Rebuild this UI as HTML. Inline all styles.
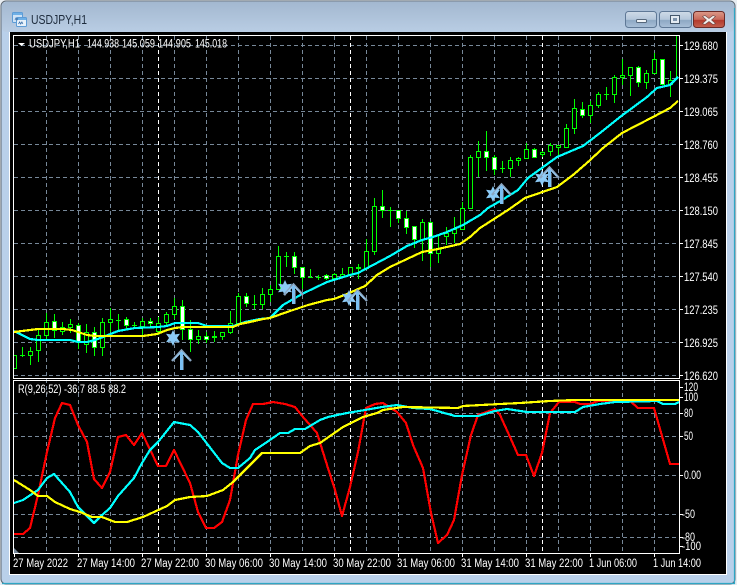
<!DOCTYPE html>
<html><head><meta charset="utf-8"><style>
html,body{margin:0;padding:0;background:#fff;width:737px;height:585px;overflow:hidden}
svg{display:block;position:absolute;left:0;top:0}
text{font-family:"Liberation Sans",sans-serif;font-size:11.5px;fill:#fff}
</style></head><body>
<svg width="737" height="585" viewBox="0 0 737 585" xmlns="http://www.w3.org/2000/svg">
<defs>
<linearGradient id="tb" x1="0" y1="0" x2="0" y2="1"><stop offset="0" stop-color="#a3b8d0"/><stop offset="1" stop-color="#b9cde4"/></linearGradient>
<linearGradient id="bb" x1="0" y1="0" x2="0" y2="1"><stop offset="0" stop-color="#cfdbe8"/><stop offset=".5" stop-color="#b4c6da"/><stop offset=".55" stop-color="#8ea8c4"/><stop offset="1" stop-color="#a9c0d8"/></linearGradient>
<linearGradient id="cb" x1="0" y1="0" x2="0" y2="1"><stop offset="0" stop-color="#dc9a8a"/><stop offset=".5" stop-color="#c8695a"/><stop offset=".55" stop-color="#b33a2c"/><stop offset="1" stop-color="#c4604e"/></linearGradient>
<clipPath id="cm"><rect x="14" y="36" width="665" height="342"/></clipPath>
<clipPath id="ci"><rect x="14" y="381" width="665" height="172"/></clipPath>
<g id="ar" fill="none"><path d="M-9.5 12L0 1.5L9.5 12" stroke="#8aa6c2" stroke-width="2.4"/><path d="M-7 10L0 3L7 10" stroke="#9ad0f8" stroke-width="1.2"/><path d="M0 3V21" stroke="#7cc0f2" stroke-width="3"/><path d="M2 7V21" stroke="#66788a" stroke-width=".8"/></g>
<path id="st" d="M0-8L2-3.6L7-4.2L4 0L7 4.2L2 3.6L0 8L-2 3.6L-7 4.2L-4 0L-7-4.2L-2-3.6Z" fill="#8ccaf6"/>
</defs>

<!-- window frame -->
<rect width="737" height="585" fill="#e8edf2"/>
<rect x="1" y="1" width="734" height="583" rx="5" fill="#b9d0ea" stroke="#5d6670"/>
<rect x="2" y="2" width="732" height="30" rx="4" fill="url(#tb)"/>
<path d="M734.5 8V583.5H2" fill="none" stroke="#2fa6c4" stroke-width="1.2"/>
<rect x="9" y="32" width="718" height="543" fill="#fff"/>
<rect x="10" y="32" width="716" height="542" fill="#000"/>

<!-- title -->
<g>
<rect x="12.5" y="12.5" width="10" height="10" rx="1" fill="#cfe3f6" stroke="#5d9cd6"/>
<rect x="16.5" y="17.5" width="10" height="9" rx="1" fill="#e8f2fb" stroke="#5d9cd6"/>
<rect x="13" y="13" width="9" height="2" fill="#6fb0e6"/><rect x="17" y="18" width="9" height="2" fill="#6fb0e6"/>
<path d="M15 20l1-2 1 2 1-2M18.5 24l1.2-2 1 2 1.2-2 1 2" fill="none" stroke="#3b6fa8" stroke-width=".8"/>
</g>
<text x="31" y="24" style="font-size:13px;fill:#1d2b3c" textLength="56" lengthAdjust="spacingAndGlyphs">USDJPY,H1</text>
<rect x="625.5" y="11.5" width="31" height="16" rx="3" fill="url(#bb)" stroke="#5f7896"/>
<rect x="659.5" y="11.5" width="32" height="16" rx="3" fill="url(#bb)" stroke="#5f7896"/>
<rect x="693.5" y="11.5" width="31" height="16" rx="3" fill="url(#cb)" stroke="#6a2a26"/>
<rect x="636.5" y="19.5" width="10" height="3" rx="1" fill="#f2f5f8" stroke="#55667a"/>
<rect x="670.5" y="15.5" width="9" height="8" fill="#e4ebf2" stroke="#45586c"/><rect x="673" y="18" width="4" height="3" fill="#7d93ab"/>
<path d="M705 15.5l4 3 4-3 2.5 1-4 3.5 4 3.5-2.5 1-4-3-4 3-2.5-1 4-3.5-4-3.5z" fill="#f4f1ef" stroke="#6b4a48" stroke-width=".6"/>

<!-- grid -->
<g fill="none" stroke="#778899" stroke-width="1" stroke-dasharray="4 3" shape-rendering="crispEdges">
<path d="M14 45.5H679M14 78.5H679M14 111.5H679M14 144.5H679M14 177.5H679M14 210.5H679M14 243.5H679M14 276.5H679M14 309.5H679M14 342.5H679M14 375.5H679"/>
<path d="M14 413.5H679M14 436.5H679M14 475.5H679M14 514.5H679M14 537.5H679"/>
<path d="M46.5 36V553M78.5 36V553M110.5 36V553M142.5 36V553M174.5 36V553M206.5 36V553M238.5 36V553M270.5 36V553M302.5 36V553M334.5 36V553M366.5 36V553M398.5 36V553M430.5 36V553M462.5 36V553M494.5 36V553M526.5 36V553M558.5 36V553M590.5 36V553M622.5 36V553M654.5 36V553"/>
</g>
<path d="M158.5 36V553M350.5 36V553M542.5 36V553" fill="none" stroke="#fff" stroke-dasharray="4 3" shape-rendering="crispEdges"/>

<!-- candles -->
<g clip-path="url(#cm)" shape-rendering="crispEdges" stroke="#00ff00" stroke-width="1">
<path fill="none" d="M14.5 355V368M22.5 347V357M30.5 347V365M38.5 330V362M46.5 313V340M54.5 314V338M62.5 322V335M70.5 319V333M78.5 323V349M86.5 324V353M94.5 327V356M102.5 318V356M110.5 308V332M118.5 314V331M126.5 317V330M134.5 322V329M142.5 318V337M150.5 318V327M158.5 317V335M166.5 312V327M174.5 298V319M182.5 300V340M190.5 320V352M198.5 330V344M206.5 332V343M214.5 331V342M222.5 332V340M230.5 311V334M238.5 293V323M246.5 293V307M254.5 295V309M262.5 288V309M270.5 285V302M278.5 246V290M286.5 252V267M294.5 252V274M302.5 267V289M310.5 269V277M318.5 275V280M326.5 274V280M334.5 273V281M342.5 268V277M350.5 267V277M358.5 264V279M366.5 239V270M374.5 198V255M382.5 190V218M390.5 207V227M398.5 210V223M406.5 211V234M414.5 226V248M422.5 219V261M430.5 221V267M438.5 235V263M446.5 227V245M454.5 217V243M462.5 202V230M470.5 155V208M478.5 141V177M486.5 131V171M494.5 155V175M502.5 161V173M510.5 157V177M518.5 157V166M526.5 143V159M534.5 148V158M542.5 151V157M550.5 143V156M558.5 145V155M566.5 124V148M574.5 99V134M582.5 102V118M590.5 101V123M598.5 92V108M606.5 87V100M614.5 75V103M622.5 59V85M630.5 67V96M638.5 66V87M646.5 70V89M654.5 53V74M662.5 59V85M670.5 71V97M676.5 36V78"/>
<path fill="none" d="M20 355.5H25M116 320.5H121M132 325.5H137M252 304.5H257M284 256.5H289M308 277.5H313M316 277.5H321M388 210.5H393M500 168.5H505M604 94.5H609"/>
<g fill="#000">
<rect x="12.5" y="355.5" width="4" height="13"/><rect x="28.5" y="351.5" width="4" height="4"/><rect x="36.5" y="335.5" width="4" height="15"/><rect x="44.5" y="322.5" width="4" height="13"/><rect x="60.5" y="327.5" width="4" height="4"/><rect x="68.5" y="324.5" width="4" height="3"/><rect x="84.5" y="332.5" width="4" height="12"/><rect x="100.5" y="322.5" width="4" height="25"/><rect x="108.5" y="319.5" width="4" height="3"/><rect x="140.5" y="321.5" width="4" height="5"/><rect x="156.5" y="323.5" width="4" height="8"/><rect x="164.5" y="314.5" width="4" height="8"/><rect x="172.5" y="306.5" width="4" height="8"/><rect x="196.5" y="336.5" width="4" height="3"/><rect x="212.5" y="336.5" width="4" height="1"/><rect x="220.5" y="332.5" width="4" height="4"/><rect x="228.5" y="323.5" width="4" height="9"/><rect x="236.5" y="296.5" width="4" height="27"/><rect x="260.5" y="294.5" width="4" height="10"/><rect x="268.5" y="289.5" width="4" height="5"/><rect x="276.5" y="256.5" width="4" height="33"/><rect x="332.5" y="274.5" width="4" height="4"/><rect x="340.5" y="274.5" width="4" height="2"/><rect x="348.5" y="267.5" width="4" height="7"/><rect x="356.5" y="267.5" width="4" height="1"/><rect x="364.5" y="251.5" width="4" height="17"/><rect x="372.5" y="206.5" width="4" height="45"/><rect x="420.5" y="222.5" width="4" height="17"/><rect x="436.5" y="248.5" width="4" height="5"/><rect x="444.5" y="233.5" width="4" height="3"/><rect x="452.5" y="229.5" width="4" height="4"/><rect x="460.5" y="208.5" width="4" height="21"/><rect x="468.5" y="157.5" width="4" height="51"/><rect x="476.5" y="151.5" width="4" height="6"/><rect x="508.5" y="160.5" width="4" height="8"/><rect x="516.5" y="158.5" width="4" height="2"/><rect x="524.5" y="149.5" width="4" height="9"/><rect x="540.5" y="152.5" width="4" height="2"/><rect x="548.5" y="145.5" width="4" height="6"/><rect x="556.5" y="145.5" width="4" height="2"/><rect x="564.5" y="128.5" width="4" height="19"/><rect x="572.5" y="108.5" width="4" height="20"/><rect x="588.5" y="105.5" width="4" height="10"/><rect x="596.5" y="94.5" width="4" height="11"/><rect x="612.5" y="77.5" width="4" height="17"/><rect x="620.5" y="75.5" width="4" height="2"/><rect x="628.5" y="67.5" width="4" height="8"/><rect x="644.5" y="73.5" width="4" height="9"/><rect x="652.5" y="59.5" width="4" height="14"/><rect x="668.5" y="80.5" width="4" height="4"/>
</g>
<g fill="#fff">
<rect x="52.5" y="321.5" width="4" height="9"/><rect x="76.5" y="325.5" width="4" height="16"/><rect x="92.5" y="332.5" width="4" height="15"/><rect x="124.5" y="319.5" width="4" height="6"/><rect x="148.5" y="321.5" width="4" height="2"/><rect x="180.5" y="306.5" width="4" height="23"/><rect x="188.5" y="329.5" width="4" height="10"/><rect x="204.5" y="336.5" width="4" height="3"/><rect x="244.5" y="296.5" width="4" height="7"/><rect x="292.5" y="256.5" width="4" height="11"/><rect x="300.5" y="267.5" width="4" height="10"/><rect x="324.5" y="275.5" width="4" height="3"/><rect x="380.5" y="206.5" width="4" height="4"/><rect x="396.5" y="210.5" width="4" height="8"/><rect x="404.5" y="218.5" width="4" height="9"/><rect x="412.5" y="226.5" width="4" height="13"/><rect x="428.5" y="222.5" width="4" height="31"/><rect x="484.5" y="151.5" width="4" height="6"/><rect x="492.5" y="157.5" width="4" height="12"/><rect x="532.5" y="149.5" width="4" height="8"/><rect x="580.5" y="109.5" width="4" height="6"/><rect x="636.5" y="67.5" width="4" height="15"/><rect x="660.5" y="59.5" width="4" height="25"/>
</g>
</g>

<!-- MAs -->
<g clip-path="url(#cm)" fill="none" stroke-width="2.2" stroke-linejoin="round" shape-rendering="crispEdges">
<polyline stroke="#00ffff" points="14,331 20,334 30,339 38,340 70,340 78,342 87,342 95,340 103,337 118,331 135,328 158,327 167,326 175,323 198,323 207,326 233,326 245,322 260,319 270,318 283,305 302,294 327,282 350,275 358,273 373,265 390,256 407,246 422,240 433,237 447,232 463,225 480,215 488,208 502,200 518,190 528,178 557,157 583,146 600,133 620,117 647,97 657,88 670,85 678,77"/>
<polyline stroke="#ffff00" points="14,332 22,331 30,330 38,329 63,329 72,330 78,332 87,335 95,336 143,336 157,334 167,330 175,328 183,327 198,327 233,327 240,324 250,322 263,319 270,318 290,311 308,305 327,300 334,299 347,294 365,286 377,275 390,267 407,259 422,252 438,249 460,244 470,237 480,228 508,210 525,198 557,187 573,175 588,162 603,148 622,133 653,117 670,108 678,101"/>
</g>

<!-- signals -->
<use href="#st" x="173" y="338"/><use href="#ar" x="181.5" y="349"/>
<use href="#st" x="285" y="288"/><use href="#ar" x="293.5" y="283"/>
<use href="#st" x="349" y="298"/><use href="#ar" x="357.5" y="289"/>
<use href="#st" x="493" y="194"/><use href="#ar" x="501.5" y="183"/>
<use href="#st" x="542" y="178"/><use href="#ar" x="549.5" y="166"/>

<!-- indicator -->
<g clip-path="url(#ci)" fill="none" stroke-width="2.2" stroke-linejoin="round" shape-rendering="crispEdges">
<polyline stroke="#ff0000" points="14,534 23,534 30,528 38,495 47,452 55,418 62,403 70,405 78,425 87,442 94,479 102,488 110,472 118,437 126,435 134,445 142,433 158,466 166,466 174,450 190,483 198,512 206,528 214,528 222,522 230,500 238,455 246,420 253,404 263,404 273,402 285,404 295,407 303,417 317,433 327,465 335,490 342,516 350,487 358,452 366,408 375,404 383,403 397,412 406,423 413,445 423,468 431,513 438,543 447,535 454,520 462,475 471,435 478,415 495,409 500,415 510,437 518,455 526,455 534,476 542,453 550,413 559,402 575,402 580,404 590,404 598,401 630,401 638,408 654,408 670,464 679,464"/>
<polyline stroke="#00ffff" points="14,503 23,500 38,490 47,478 54,474 70,492 78,507 94,523 102,515 110,508 118,496 134,478 142,463 150,450 158,442 174,422 190,425 198,432 222,463 230,468 238,468 250,458 255,450 267,442 280,433 288,433 295,429 305,429 320,420 328,417 347,413 365,410 382,407 397,405 413,408 430,409 455,416 478,416 495,411 507,409 527,412 575,412 583,407 600,404 615,402 657,401 663,404 675,404 679,402"/>
<polyline stroke="#ffff00" points="14,480 30,490 38,496 47,496 55,502 70,509 80,512 92,517 102,517 115,522 127,522 143,517 167,506 175,500 190,497 207,496 223,490 233,482 250,465 262,453 300,453 310,446 320,443 343,427 363,417 377,413 383,410 403,407 458,408 463,406 500,404 520,403 550,401 575,400 679,400"/>
</g>
<path d="M14 548L19 553H14Z" fill="#778899"/>

<!-- borders -->
<g fill="none" stroke="#fff" shape-rendering="crispEdges">
<path d="M13.5 35.5H679.5V378.5H13.5Z"/>
<path d="M13.5 380.5H679.5V553.5H13.5Z"/>
<path d="M679 45.5h4M679 78.5h4M679 111.5h4M679 144.5h4M679 177.5h4M679 210.5h4M679 243.5h4M679 276.5h4M679 309.5h4M679 342.5h4M679 375.5h4M679 387.5h4M679 397.5h4M679 413.5h4M679 436.5h4M679 475.5h4M679 514.5h4M679 537.5h4M679 546.5h4"/>
<path d="M14.5 553v4M78.5 553v4M142.5 553v4M206.5 553v4M270.5 553v4M334.5 553v4M398.5 553v4M462.5 553v4M526.5 553v4M590.5 553v4M654.5 553v4"/>
</g>
<path d="M18 43h7l-3.5 3z" fill="#fff"/>

<!-- text -->
<text x="29" y="47.5" textLength="51" lengthAdjust="spacingAndGlyphs">USDJPY,H1</text>
<text x="87" y="47.5" textLength="32" lengthAdjust="spacingAndGlyphs">144.938</text>
<text x="122" y="47.5" textLength="33" lengthAdjust="spacingAndGlyphs">145.059</text>
<text x="158" y="47.5" textLength="33" lengthAdjust="spacingAndGlyphs">144.905</text>
<text x="195" y="47.5" textLength="32" lengthAdjust="spacingAndGlyphs">145.018</text>
<text x="18" y="393" textLength="108" lengthAdjust="spacingAndGlyphs">R(9,26,52) -36.7 88.5 88.2</text>

<g>
<text x="684" y="50" textLength="34" lengthAdjust="spacingAndGlyphs">129.680</text>
<text x="684" y="83" textLength="34" lengthAdjust="spacingAndGlyphs">129.375</text>
<text x="684" y="116" textLength="34" lengthAdjust="spacingAndGlyphs">129.065</text>
<text x="684" y="149" textLength="34" lengthAdjust="spacingAndGlyphs">128.760</text>
<text x="684" y="182" textLength="34" lengthAdjust="spacingAndGlyphs">128.455</text>
<text x="684" y="215" textLength="34" lengthAdjust="spacingAndGlyphs">128.150</text>
<text x="684" y="248" textLength="34" lengthAdjust="spacingAndGlyphs">127.845</text>
<text x="684" y="281" textLength="34" lengthAdjust="spacingAndGlyphs">127.540</text>
<text x="684" y="314" textLength="34" lengthAdjust="spacingAndGlyphs">127.235</text>
<text x="684" y="347" textLength="34" lengthAdjust="spacingAndGlyphs">126.925</text>
<text x="684" y="380" textLength="34" lengthAdjust="spacingAndGlyphs">126.620</text>
<text x="684" y="391" textLength="14" lengthAdjust="spacingAndGlyphs">120</text>
<text x="684" y="401" textLength="14" lengthAdjust="spacingAndGlyphs">100</text>
<text x="684" y="417" textLength="9" lengthAdjust="spacingAndGlyphs">80</text>
<text x="684" y="440" textLength="9" lengthAdjust="spacingAndGlyphs">50</text>
<text x="684" y="479" textLength="17" lengthAdjust="spacingAndGlyphs">0.00</text>
<text x="682" y="518" textLength="13" lengthAdjust="spacingAndGlyphs">-50</text>
<text x="682" y="541" textLength="13" lengthAdjust="spacingAndGlyphs">-80</text>
<text x="682" y="550" textLength="19" lengthAdjust="spacingAndGlyphs">-100</text>
</g>
<g>
<text x="13" y="567" textLength="55" lengthAdjust="spacingAndGlyphs">27 May 2022</text>
<text x="77" y="567" textLength="58" lengthAdjust="spacingAndGlyphs">27 May 14:00</text>
<text x="141" y="567" textLength="58" lengthAdjust="spacingAndGlyphs">27 May 22:00</text>
<text x="205" y="567" textLength="58" lengthAdjust="spacingAndGlyphs">30 May 06:00</text>
<text x="269" y="567" textLength="58" lengthAdjust="spacingAndGlyphs">30 May 14:00</text>
<text x="333" y="567" textLength="58" lengthAdjust="spacingAndGlyphs">30 May 22:00</text>
<text x="397" y="567" textLength="58" lengthAdjust="spacingAndGlyphs">31 May 06:00</text>
<text x="461" y="567" textLength="58" lengthAdjust="spacingAndGlyphs">31 May 14:00</text>
<text x="525" y="567" textLength="58" lengthAdjust="spacingAndGlyphs">31 May 22:00</text>
<text x="589" y="567" textLength="48" lengthAdjust="spacingAndGlyphs">1 Jun 06:00</text>
<text x="653" y="567" textLength="48" lengthAdjust="spacingAndGlyphs">1 Jun 14:00</text>
</g>
</svg>
</body></html>
